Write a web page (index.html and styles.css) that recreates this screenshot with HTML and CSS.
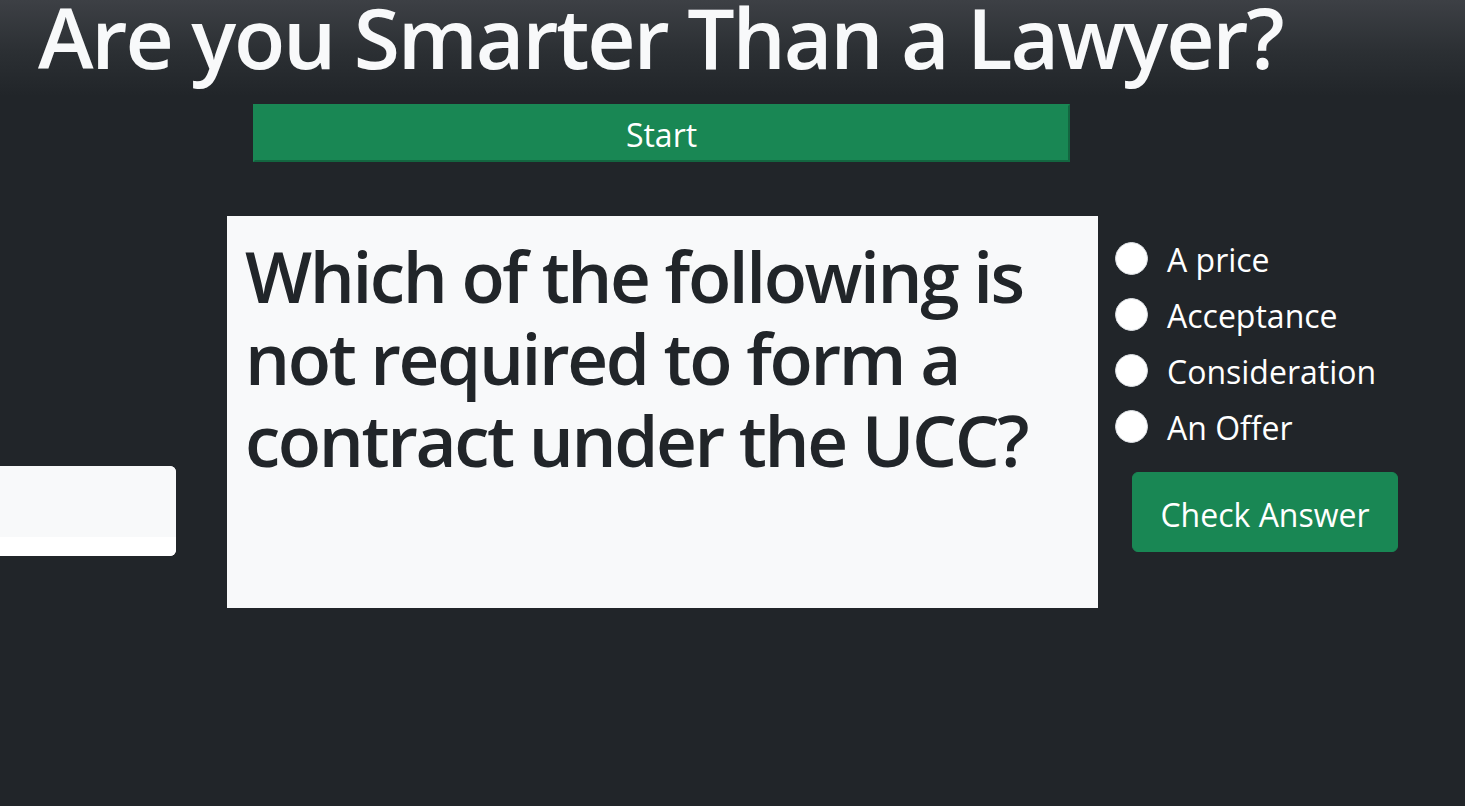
FILE: index.html
```html
<!DOCTYPE html>
<html lang="en">
<head>
<meta charset="utf-8">
<title>Are you Smarter Than a Lawyer?</title>
<link rel="stylesheet" href="styles.css">
</head>
<body>
<header class="hero">
  <h1 class="hero-title">Are you Smarter Than a Lawyer?</h1>
</header>
<div class="start-row">
  <button class="btn-start" type="button">Start</button>
</div>
<main class="quiz">
  <div class="side-card">
    <div class="side-card-body"></div>
    <div class="side-card-foot"></div>
  </div>
  <section class="question-box">
    <h2 class="question-text">Which of the following is not required to form a contract under the UCC?</h2>
  </section>
  <form class="answers">
    <label class="answer"><input class="radio" type="radio" name="answer" value="price"><span class="answer-text">A price</span></label>
    <label class="answer"><input class="radio" type="radio" name="answer" value="acceptance"><span class="answer-text">Acceptance</span></label>
    <label class="answer"><input class="radio" type="radio" name="answer" value="consideration"><span class="answer-text">Consideration</span></label>
    <label class="answer"><input class="radio" type="radio" name="answer" value="offer"><span class="answer-text">An Offer</span></label>
    <button class="btn-check" type="button">Check Answer</button>
  </form>
</main>
</body>
</html>
```
FILE: styles.css
```css
html, body {
  margin: 0;
  padding: 0;
}
body {
  background: #212529;
  color: #f8f9fa;
  font-family: "Open Sans", "Noto Sans", sans-serif;
  overflow: hidden;
  height: 806px;
}
.hero {
  display: flow-root;
  background: linear-gradient(180deg, #3d4045 0%, #2b2f33 55%, #212529 100%);
  padding: 0 0 22px 38px;
}
.hero-title {
  margin: 0;
  font-size: 84px;
  line-height: 74px;
  font-weight: 600;
  letter-spacing: -2.2px;
  color: #f8f9fa;
  white-space: nowrap;
}
.start-row {
  padding: 8px 0 0 253px;
}
.btn-start {
  display: block;
  width: 817px;
  height: 58px;
  background: #198754;
  border: 2px solid #198754;
  border-right-color: #136640;
  border-bottom-color: #136640;
  color: #fff;
  font-family: inherit;
  font-size: 32px;
  line-height: 1;
  padding: 4px 0 0 0;
}
.quiz {
  display: flex;
  align-items: flex-start;
  margin-top: 54px;
}
.side-card {
  width: 176px;
  margin-top: 250px;
  margin-right: 51px;
  border-radius: 0 6px 6px 0;
  overflow: hidden;
  background: #fff;
}
.side-card-body {
  height: 71px;
  background: #f8f9fa;
}
.side-card-foot {
  height: 19px;
  background: #fff;
}
.question-box {
  width: 871px;
  height: 392px;
  box-sizing: border-box;
  background: #f8f9fa;
  padding: 19px 18px 0 18px;
}
.question-text {
  margin: 0;
  color: #212529;
  font-size: 71px;
  line-height: 82px;
  font-weight: 600;
  letter-spacing: -2.4px;
}
.answers {
  display: flex;
  flex-direction: column;
  align-items: flex-start;
  margin: 14px 0 0 17px;
}
.answer {
  display: flex;
  align-items: center;
  height: 56px;
  gap: 19px;
}
.radio {
  appearance: none;
  -webkit-appearance: none;
  width: 33px;
  height: 33px;
  margin: 0;
  border-radius: 50%;
  background: #fff;
  border: 1px solid #dee2e6;
  box-sizing: border-box;
}
.answer-text {
  font-size: 32px;
  line-height: 44px;
  padding-top: 4px;
  color: #fff;
}
.btn-check {
  margin: 18px 0 0 17px;
  width: 266px;
  height: 80px;
  background: #198754;
  border: 1px solid #198754;
  border-radius: 6px;
  color: #fff;
  font-family: inherit;
  font-size: 32px;
  padding: 4px 0 0 0;
}
```
